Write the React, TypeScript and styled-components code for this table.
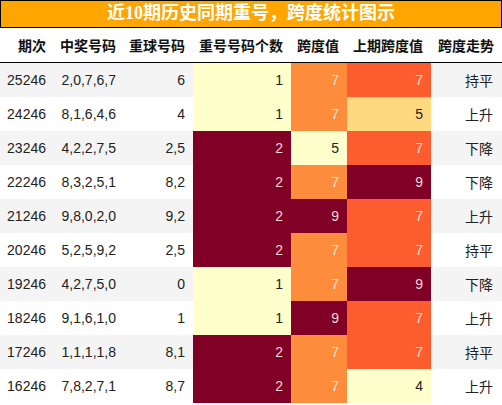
import React from 'react';
import styled, { createGlobalStyle } from 'styled-components';

const GlobalStyle = createGlobalStyle`
  body {
    margin: 0;
    background: #ffffff;
    font-family: "Liberation Sans", Arial, "Noto Sans CJK SC", sans-serif;
  }
`;

const Wrapper = styled.div`
  width: 502px;
`;

const TitleBar = styled.div`
  box-sizing: border-box;
  height: 28px;
  background: #ffa500;
  border: 1px solid #000;
  color: #ffffff;
  font-family: "Liberation Serif", "Noto Sans CJK SC", serif;
  font-weight: bold;
  font-size: 18px;
  line-height: 25px;
  text-align: center;
`;

const Table = styled.table`
  width: 502px;
  border-collapse: collapse;
  table-layout: fixed;
  font-size: 14px;
`;

const HeadCell = styled.th`
  height: 34px;
  padding: 0 8px 0 0;
  text-align: right;
  font-family: "Noto Sans CJK SC", sans-serif;
  font-weight: bold;
  font-size: 14px;
  color: #111;
  border-bottom: 1px solid #000;
`;

const Row = styled.tr<{ $odd: boolean }>`
  background: ${(p) => (p.$odd ? '#f4f4f4' : '#ffffff')};
`;

const Cell = styled.td<{ $bg?: string; $fg?: string }>`
  height: 34px;
  padding: 0 8px 0 0;
  text-align: right;
  color: ${(p) => p.$fg || '#222'};
  background: ${(p) => p.$bg || 'transparent'};
  font-family: "Liberation Sans", Arial, "Noto Sans CJK SC", sans-serif;
  white-space: nowrap;
`;

const TrendCell = styled(Cell)`
  padding-right: 9px;
  font-family: "Noto Sans CJK SC", sans-serif;
`;

type Tone = 'y' | 'l' | 'o' | 'r' | 'm';

const palette: Record<Tone, { bg: string; fg: string }> = {
  y: { bg: '#ffffcc', fg: '#222' },
  l: { bg: '#fed980', fg: '#222' },
  o: { bg: '#fd8c3c', fg: '#fde6d6' },
  r: { bg: '#fd5c2e', fg: '#fde0d6' },
  m: { bg: '#800026', fg: '#eed7dc' },
};

type Item = {
  issue: string;
  nums: string;
  repeat: string;
  count: [string, Tone];
  span: [string, Tone];
  prev: [string, Tone];
  trend: string;
};

const rows: Item[] = [
  { issue: '25246', nums: '2,0,7,6,7', repeat: '6', count: ['1', 'y'], span: ['7', 'o'], prev: ['7', 'r'], trend: '持平' },
  { issue: '24246', nums: '8,1,6,4,6', repeat: '4', count: ['1', 'y'], span: ['7', 'o'], prev: ['5', 'l'], trend: '上升' },
  { issue: '23246', nums: '4,2,2,7,5', repeat: '2,5', count: ['2', 'm'], span: ['5', 'y'], prev: ['7', 'r'], trend: '下降' },
  { issue: '22246', nums: '8,3,2,5,1', repeat: '8,2', count: ['2', 'm'], span: ['7', 'o'], prev: ['9', 'm'], trend: '下降' },
  { issue: '21246', nums: '9,8,0,2,0', repeat: '9,2', count: ['2', 'm'], span: ['9', 'm'], prev: ['7', 'r'], trend: '上升' },
  { issue: '20246', nums: '5,2,5,9,2', repeat: '2,5', count: ['2', 'm'], span: ['7', 'o'], prev: ['7', 'r'], trend: '持平' },
  { issue: '19246', nums: '4,2,7,5,0', repeat: '0', count: ['1', 'y'], span: ['7', 'o'], prev: ['9', 'm'], trend: '下降' },
  { issue: '18246', nums: '9,1,6,1,0', repeat: '1', count: ['1', 'y'], span: ['9', 'm'], prev: ['7', 'r'], trend: '上升' },
  { issue: '17246', nums: '1,1,1,1,8', repeat: '8,1', count: ['2', 'm'], span: ['7', 'o'], prev: ['7', 'r'], trend: '持平' },
  { issue: '16246', nums: '7,8,2,7,1', repeat: '8,7', count: ['2', 'm'], span: ['7', 'o'], prev: ['4', 'y'], trend: '上升' },
];

const widths = [54, 70, 69, 98, 56, 84, 71];
const headers = ['期次', '中奖号码', '重球号码', '重号号码个数', '跨度值', '上期跨度值', '跨度走势'];

const Colored = ({ v }: { v: [string, Tone] }) => (
  <Cell $bg={palette[v[1]].bg} $fg={palette[v[1]].fg}>
    {v[0]}
  </Cell>
);

const App: React.FC = () => {
  return (
    <Wrapper>
      <GlobalStyle />
      <TitleBar>近10期历史同期重号，跨度统计图示</TitleBar>
      <Table>
        <colgroup>
          {widths.map((w, i) => (
            <col key={i} style={{ width: w }} />
          ))}
        </colgroup>
        <thead>
          <tr>
            {headers.map((h) => (
              <HeadCell key={h}>{h}</HeadCell>
            ))}
          </tr>
        </thead>
        <tbody>
          {rows.map((r, i) => (
            <Row key={r.issue} $odd={i % 2 === 0}>
              <Cell>{r.issue}</Cell>
              <Cell>{r.nums}</Cell>
              <Cell>{r.repeat}</Cell>
              <Colored v={r.count} />
              <Colored v={r.span} />
              <Colored v={r.prev} />
              <TrendCell>{r.trend}</TrendCell>
            </Row>
          ))}
        </tbody>
      </Table>
    </Wrapper>
  );
};

export default App;
